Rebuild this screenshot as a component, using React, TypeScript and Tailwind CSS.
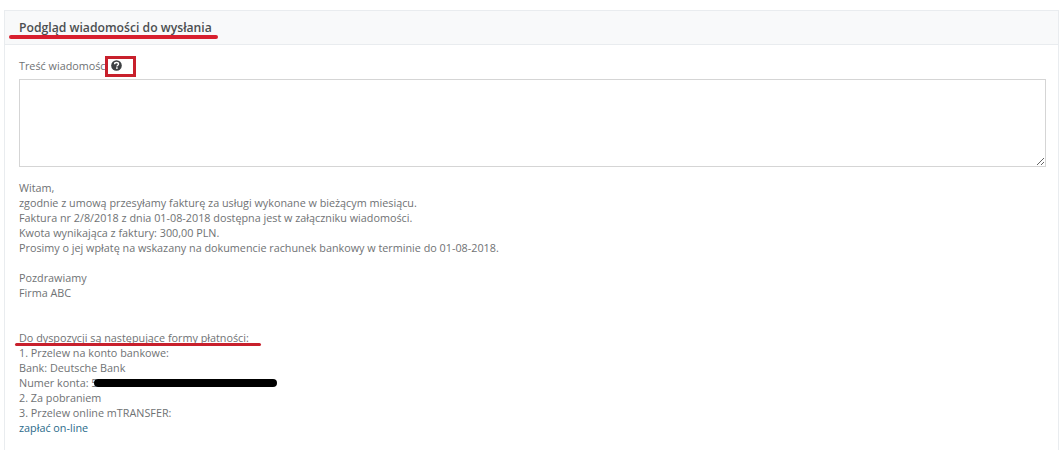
import React from "react";

const Line = ({ children }: { children?: React.ReactNode }) => (
  <div className="h-[15px] whitespace-pre">{children}</div>
);

export default function App() {
  return (
    <div className="relative w-[1063px] h-[450px] overflow-hidden bg-white pt-[10px] px-[4px] font-['Open_Sans',sans-serif] text-[10.8px] leading-[15px] text-[#6f7274]">
      <div className="border border-[#e9ecef] border-b-0 h-[460px]">
        <div className="h-[34px] bg-[#f8f9fa] border-b border-[#e9ecef] pl-[14px] pt-[9px] text-[12.2px] font-semibold text-[#4b4e50]">
          Podgląd wiadomości do wysłania
        </div>
        <div className="pl-[14px] pr-[12px] pt-[13px]">
          <div className="flex items-center h-[15px] mb-[6px]">
            <span>Treść wiadomości</span>
            <svg className="ml-[3px] w-[11px] h-[11px]" viewBox="0 0 12 12">
              <circle cx="6" cy="6" r="5.8" fill="#3d4043" />
              <path d="M3.9 4.6C3.9 3.4 4.9 2.7 6 2.7C7.3 2.7 8.2 3.5 8.2 4.5C8.2 5.7 6.4 5.7 6.4 7.1" fill="none" stroke="#fff" strokeWidth="1.5" />
              <rect x="5.5" y="8" width="1.8" height="1.6" fill="#fff" />
            </svg>
          </div>
          <textarea className="block w-[1027px] h-[88px] border border-[#d5d5d5] bg-white outline-none" />
          <div className="pt-[13px]">
            <Line>Witam,</Line>
            <Line>zgodnie z umową przesyłamy fakturę za usługi wykonane w bieżącym miesiącu.</Line>
            <Line>Faktura nr 2/8/2018 z dnia 01-08-2018 dostępna jest w załączniku wiadomości.</Line>
            <Line>Kwota wynikająca z faktury: 300,00 PLN.</Line>
            <Line>Prosimy o jej wpłatę na wskazany na dokumencie rachunek bankowy w terminie do 01-08-2018.</Line>
            <Line />
            <Line>Pozdrawiamy</Line>
            <Line>Firma ABC</Line>
            <Line />
            <Line />
            <Line>Do dyspozycji są następujące formy płatności:</Line>
            <Line>1. Przelew na konto bankowe:</Line>
            <Line>Bank: Deutsche Bank</Line>
            <Line>Numer konta: 5</Line>
            <Line>2. Za pobraniem</Line>
            <Line>3. Przelew online mTRANSFER:</Line>
            <Line><span className="text-[#2a6a8a]">zapłać on-line</span></Line>
          </div>
        </div>
      </div>
      <div className="absolute left-[9px] top-[35px] w-[209px] h-[4px] rounded-full bg-[#d81f2e]" />
      <div className="absolute left-[105px] top-[56px] w-[31px] h-[21px] border-[3px] border-[#c8202c]" />
      <div className="absolute left-[15px] top-[343px] w-[246px] h-[3px] rounded-full bg-[#c8202c]" />
      <div className="absolute left-[94px] top-[379px] w-[183px] h-[8px] rounded-full bg-black" />
    </div>
  );
}
